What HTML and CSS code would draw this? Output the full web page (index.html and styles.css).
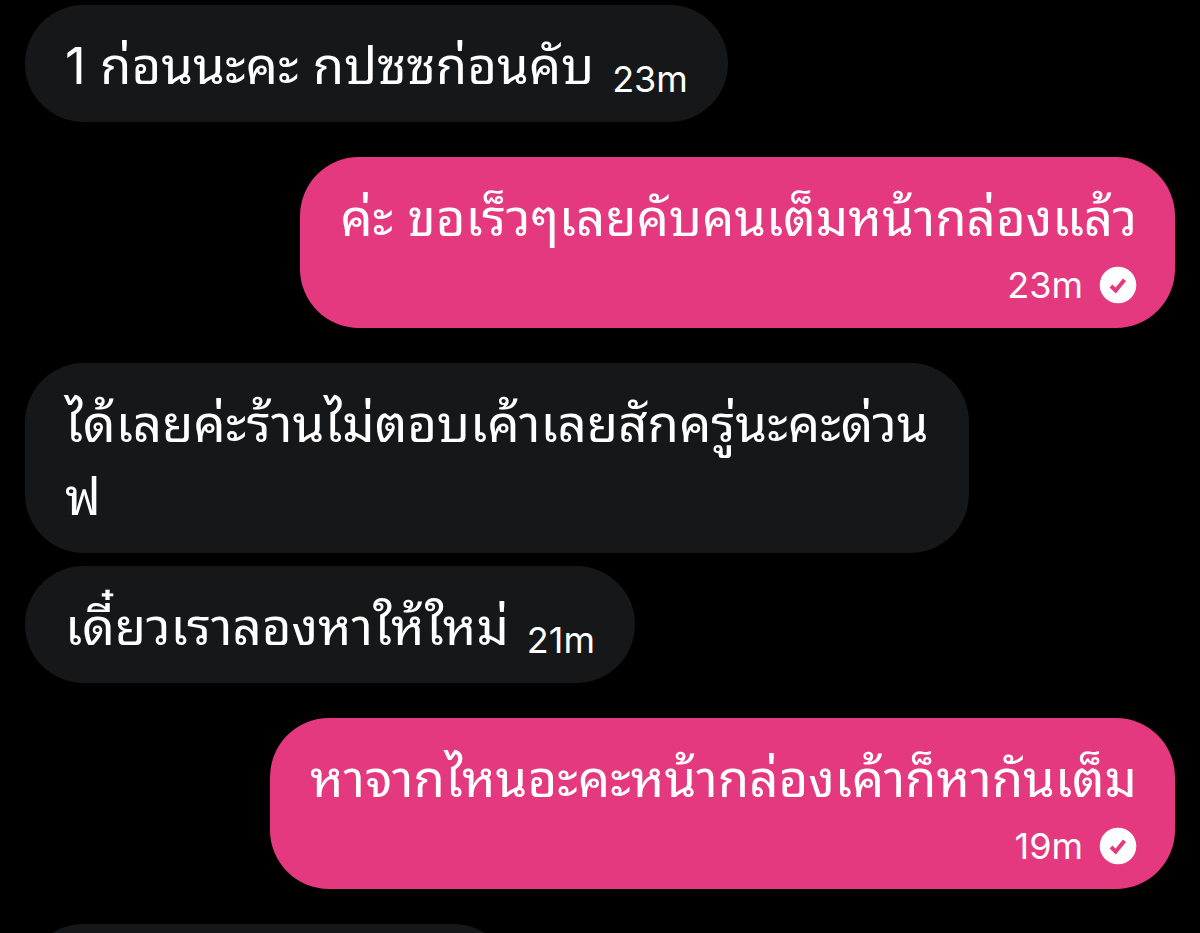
FILE: index.html
```html
<!DOCTYPE html>
<html lang="th">
  <head>
    <meta charset="UTF-8" />
    <meta name="viewport" content="width=device-width, initial-scale=1.0" />
    <title>Chat</title>
    <link rel="stylesheet" href="styles.css">
  </head>
  <body>
    <main class="chat">
      <div class="message received inline">
        <p class="text">1 ก่อนนะคะ กปซซก่อนคับ</p>
        <time class="time">23m</time>
      </div>

      <div class="message sent">
        <p class="text">ค่ะ ขอเร็วๆเลยคับคนเต็มหน้ากล่องแล้ว</p>
        <div class="meta">
          <time class="time">23m</time>
          <svg class="check" viewBox="0 0 38 38" role="img" aria-label="Seen">
            <circle cx="19" cy="19" r="18.3" fill="#fff" />
            <path d="M12 20l4.7 4.5 8.8-10.8" fill="none" stroke="#e5397f" stroke-width="4" />
          </svg>
        </div>
      </div>

      <div class="message received">
        <p class="text">ได้เลยค่ะร้านไม่ตอบเค้าเลยสักครู่นะคะด่วน<br>ฟ</p>
      </div>

      <div class="message received inline grouped">
        <p class="text">เดี๋ยวเราลองหาให้ใหม่</p>
        <time class="time">21m</time>
      </div>

      <div class="message sent">
        <p class="text">หาจากไหนอะคะหน้ากล่องเค้าก็หากันเต็ม</p>
        <div class="meta">
          <time class="time">19m</time>
          <svg class="check" viewBox="0 0 38 38" role="img" aria-label="Seen">
            <circle cx="19" cy="19" r="18.3" fill="#fff" />
            <path d="M12 20l4.7 4.5 8.8-10.8" fill="none" stroke="#e5397f" stroke-width="4" />
          </svg>
        </div>
      </div>

      <div class="message received next"></div>
    </main>
  </body>
</html>
```
FILE: styles.css
```css
body {
  margin: 0;
  height: 100vh;
  overflow: hidden;
  background: #000;
  color: #fff;
  font-family: Inter, "Noto Sans Thai Looped", Loma, sans-serif;
}

.chat {
  box-sizing: border-box;
  height: 100%;
  overflow: hidden;
  display: flex;
  flex-direction: column;
  gap: 35px;
  padding: 5px 25px 0;
}

.message {
  flex-shrink: 0;
  padding: 24px 40px 20px;
  border-radius: 59px;
}

.received {
  align-self: flex-start;
  background: #161719;
}

.sent {
  align-self: flex-end;
  padding-right: 38px;
  background: #e5397f;
}

.text {
  margin: 0;
  font-size: 51px;
  line-height: 73px;
  white-space: nowrap;
}

.inline {
  display: flex;
  align-items: flex-end;
  gap: 18px;
}

.grouped {
  margin-top: -22px;
}

.time {
  font-size: 36px;
  line-height: 46px;
}

.meta {
  display: flex;
  justify-content: flex-end;
  align-items: center;
  gap: 16px;
  margin-top: 8px;
}

.check {
  width: 38px;
  height: 38px;
}

/* bubble that starts below the fold */
.next {
  width: 407px;
  height: 73px;
}
```
